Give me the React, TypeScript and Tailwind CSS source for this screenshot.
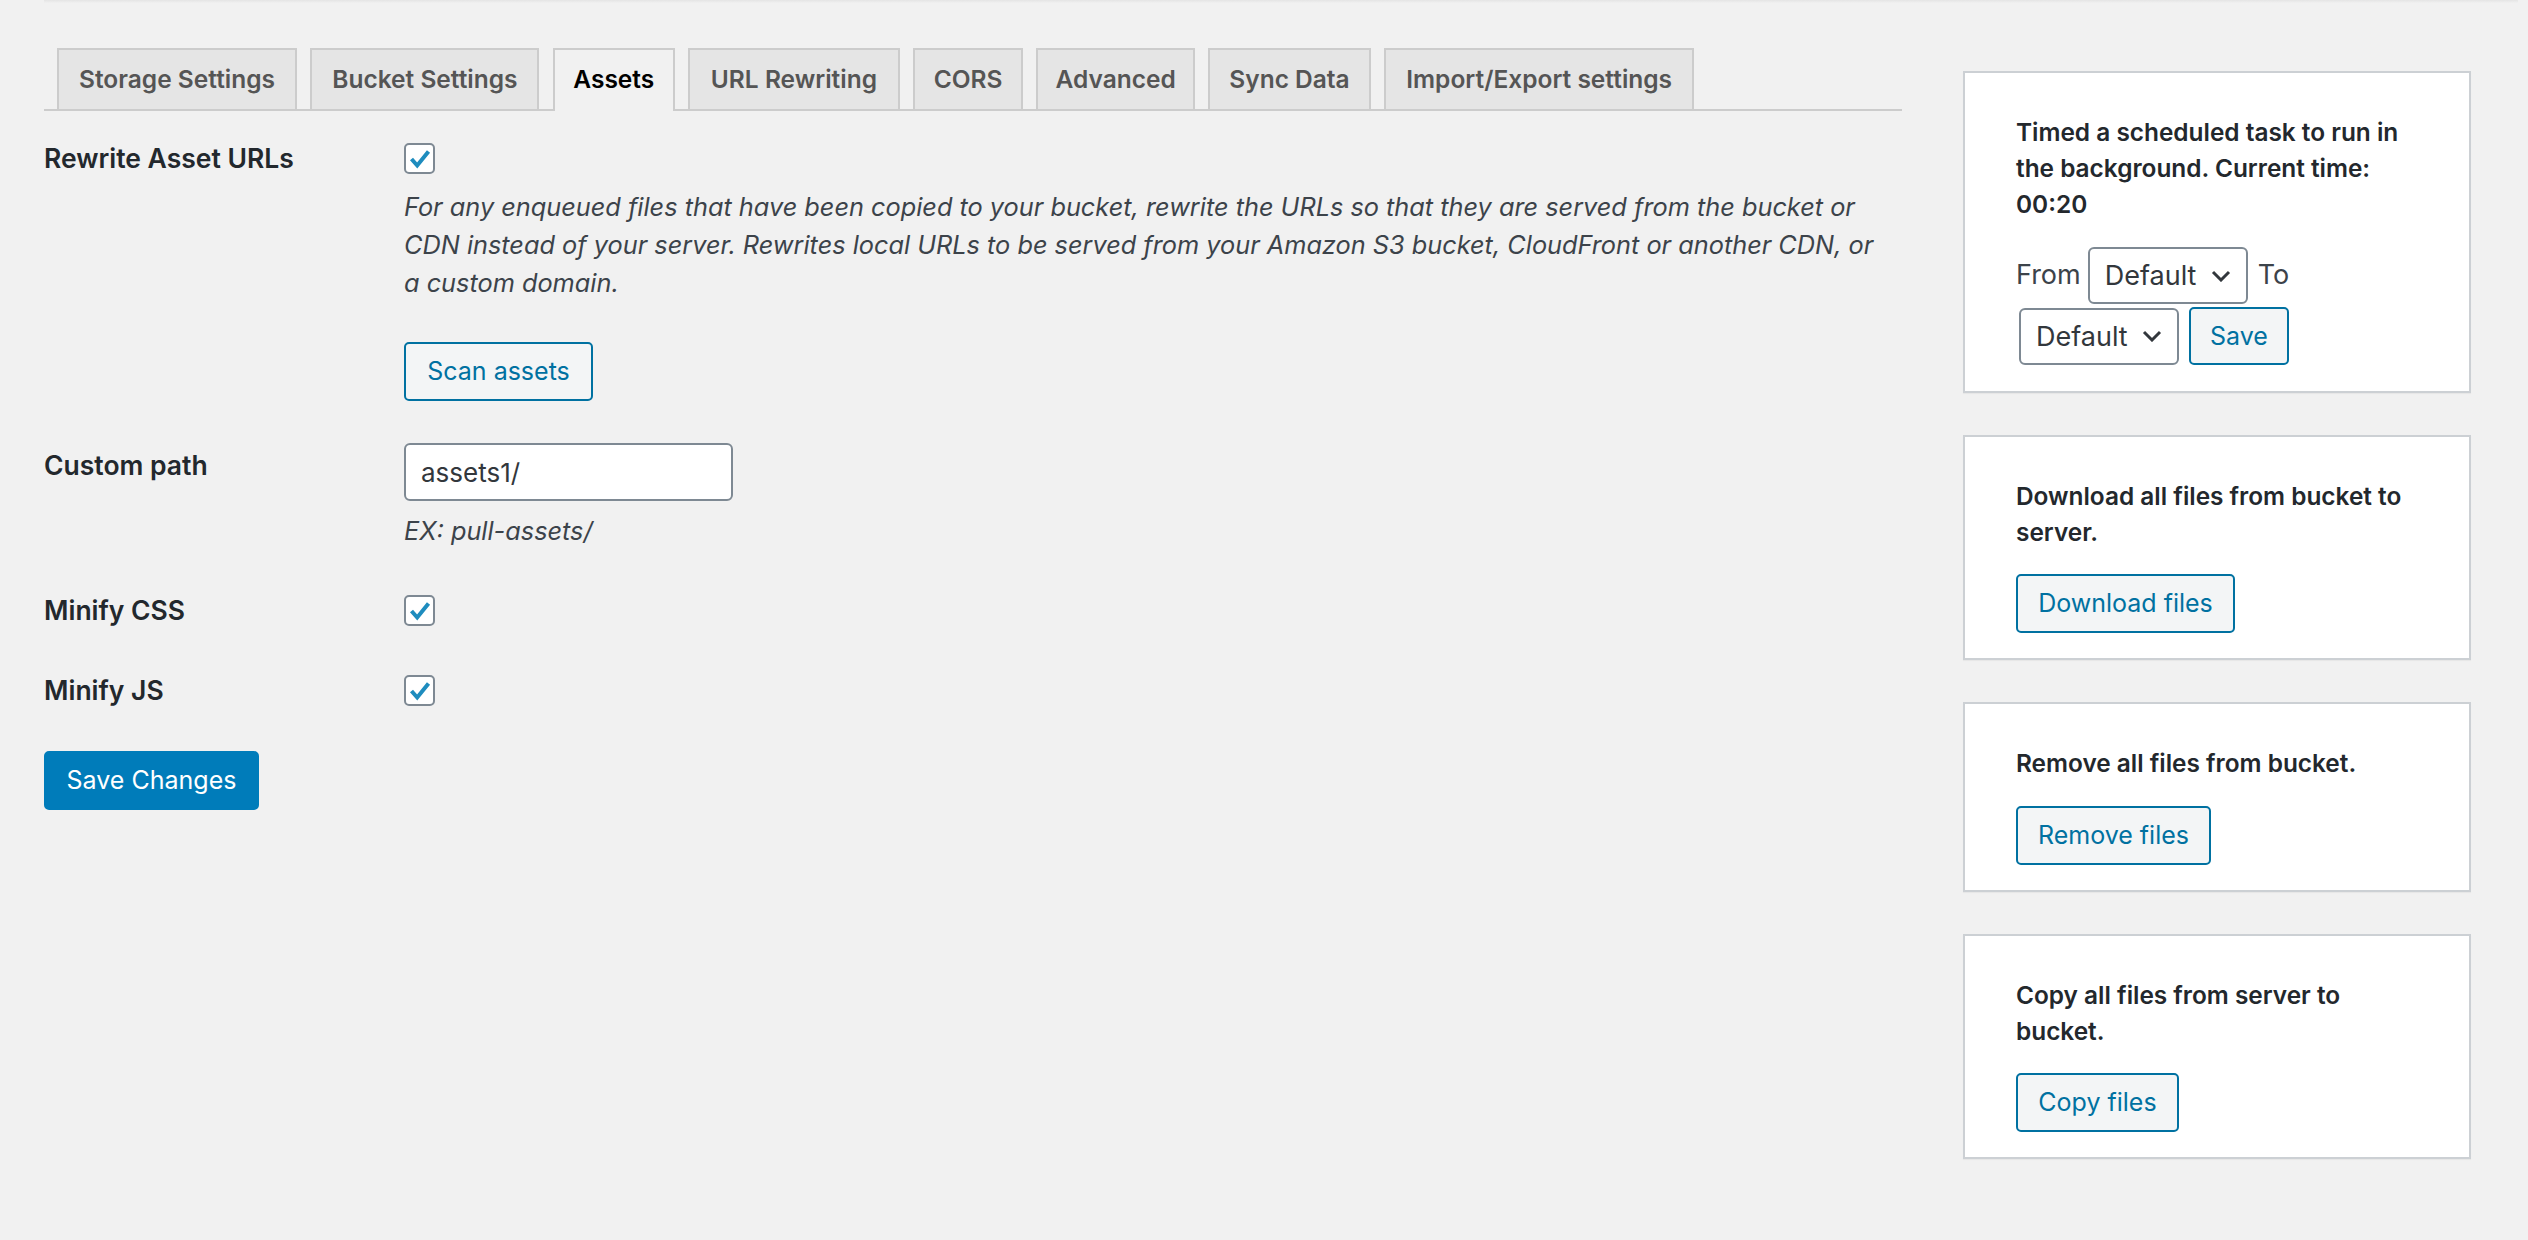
import React from "react";

const FONT = "font-['Inter','Liberation_Sans',sans-serif]";

function Checkbox() {
  return (
    <div className="w-[31px] h-[31px] rounded-[5px] border-2 border-[#7e8993] bg-white flex items-center justify-center shrink-0">
      <svg width="22" height="20" viewBox="0 0 22 20">
        <path d="M2.5 10 L8.2 16.5 L19.5 2.5" fill="none" stroke="#1e8cbe" strokeWidth="4" />
      </svg>
    </div>
  );
}

function OutlineButton({ label, w, h = 59 }: { label: string; w: number; h?: number }) {
  return (
    <div
      className="border-2 border-[#0071a1] bg-[#f3f5f6] text-[#0071a1] rounded-[5px] flex items-center justify-center text-[25px] leading-none"
      style={{ width: w, height: h }}
    >
      {label}
    </div>
  );
}

function Select() {
  return (
    <div className="w-[160px] h-[57px] border-2 border-[#7e8993] rounded-[6px] bg-white flex items-center justify-between pl-[15px] pr-[15px] text-[27px] text-[#32373c] leading-none">
      <span>Default</span>
      <svg width="20" height="12" viewBox="0 0 20 12">
        <path d="M2 2 L10 10 L18 2" fill="none" stroke="#32373c" strokeWidth="3" />
      </svg>
    </div>
  );
}

const tabs: { label: string; w: number }[] = [
  { label: "Storage Settings", w: 240 },
  { label: "Bucket Settings", w: 229 },
  { label: "Assets", w: 122 },
  { label: "URL Rewriting", w: 211.5 },
  { label: "CORS", w: 110 },
  { label: "Advanced", w: 158.5 },
  { label: "Sync Data", w: 162.3 },
  { label: "Import/Export settings", w: 310.3 },
];

function Box({ children }: { children: React.ReactNode }) {
  return (
    <div className="bg-white border-2 border-[#ccd0d4] shadow-[0_1px_1px_rgba(0,0,0,0.04)] pt-[41px] pb-[25px] pl-[51px] pr-[20px]">
      {children}
    </div>
  );
}

const labelCls = "w-[360px] shrink-0 text-[26.5px] font-semibold text-[#23282d]";
const sideText = "text-[24.4px] font-semibold leading-[36px] text-[#23282d] whitespace-nowrap";

export default function App() {
  return (
    <div className={`${FONT} bg-[#f1f1f1] min-h-[1240px] w-full`}>
      <div className="ml-[44px] mr-[10px] h-[3px] bg-gradient-to-b from-[#e4e4e4] to-[#f1f1f1]" />
      <div className="flex pl-[44px]">
        {/* Main column */}
        <div className="w-[1858px] shrink-0 pt-[45px]">
          <div className="flex items-end border-b-2 border-[#cccccc] pl-[13px] gap-[13.4px] h-[63px]">
            {tabs.map((t) =>
              t.label === "Assets" ? (
                <div
                  key={t.label}
                  className="h-[63px] -mb-[2px] border-2 border-b-0 border-[#cccccc] bg-[#f1f1f1] flex items-center justify-center text-[24.5px] font-semibold text-black pb-[2px]"
                  style={{ width: t.w }}
                >
                  {t.label}
                </div>
              ) : (
                <div
                  key={t.label}
                  className="h-[61px] border-2 border-b-0 border-[#cccccc] bg-[#e5e5e5] flex items-center justify-center text-[24.5px] font-semibold text-[#555555]"
                  style={{ width: t.w }}
                >
                  {t.label}
                </div>
              )
            )}
          </div>

          {/* Row 1 */}
          <div className="flex mt-[32px]">
            <div className={`${labelCls} leading-[31px]`}>Rewrite Asset URLs</div>
            <div className="flex flex-col items-start">
              <Checkbox />
              <p className="mt-[14px] text-[25.3px] italic leading-[38px] text-[#3c434a] whitespace-nowrap">
                For any enqueued files that have been copied to your bucket, rewrite the URLs so that they are served from the bucket or
                <br />
                CDN instead of your server. Rewrites local URLs to be served from your Amazon S3 bucket, CloudFront or another CDN, or
                <br />
                a custom domain.
              </p>
              <div className="mt-[40px]">
                <OutlineButton label="Scan assets" w={189} />
              </div>
            </div>
          </div>

          {/* Row 2 */}
          <div className="flex mt-[42px]">
            <div className={`${labelCls} leading-[44px]`}>Custom path</div>
            <div className="flex flex-col items-start">
              <div className="w-[329px] h-[58px] border-2 border-[#7e8993] rounded-[6px] bg-white flex items-center pl-[15px] text-[26px] text-[#32373c]">
                assets1/
              </div>
              <p className="mt-[11px] text-[25.3px] italic leading-[38px] text-[#3c434a]">EX: pull-assets/</p>
            </div>
          </div>

          {/* Row 3 */}
          <div className="flex mt-[45px]">
            <div className={`${labelCls} leading-[31px]`}>Minify CSS</div>
            <Checkbox />
          </div>

          {/* Row 4 */}
          <div className="flex mt-[49px]">
            <div className={`${labelCls} leading-[31px]`}>Minify JS</div>
            <Checkbox />
          </div>

          <div className="mt-[45px] w-[215px] h-[59px] rounded-[5px] bg-[#007cba] border-2 border-[#007cba] text-white flex items-center justify-center text-[25px]">
            Save Changes
          </div>
        </div>

        {/* Sidebar */}
        <div className="ml-[61px] w-[508px] shrink-0 pt-[68px] flex flex-col gap-[42px]">
          <div className="bg-white border-2 border-[#ccd0d4] shadow-[0_1px_1px_rgba(0,0,0,0.04)] pt-[41px] pb-[26px] pl-[51px] pr-[20px]">
            <p className={sideText}>
              Timed a scheduled task to run in
              <br />
              the background. Current time:
              <br />
              00:20
            </p>
            <div className="mt-[25px] flex items-center text-[27px] text-[#3c434a]">
              <span className="mr-[7px]">From</span>
              <Select />
              <span className="ml-[10px]">To</span>
            </div>
            <div className="mt-[3px] flex items-center">
              <div className="ml-[3px]">
                <Select />
              </div>
              <div className="ml-[10px]">
                <OutlineButton label="Save" w={100} h={58} />
              </div>
            </div>
          </div>

          <Box>
            <p className={sideText}>
              Download all files from bucket to
              <br />
              server.
            </p>
            <div className="mt-[24px]">
              <OutlineButton label="Download files" w={219} />
            </div>
          </Box>

          <Box>
            <p className={sideText}>Remove all files from bucket.</p>
            <div className="mt-[25px]">
              <OutlineButton label="Remove files" w={195} />
            </div>
          </Box>

          <Box>
            <p className={sideText}>
              Copy all files from server to
              <br />
              bucket.
            </p>
            <div className="mt-[24px]">
              <OutlineButton label="Copy files" w={163} />
            </div>
          </Box>
        </div>
      </div>
    </div>
  );
}
